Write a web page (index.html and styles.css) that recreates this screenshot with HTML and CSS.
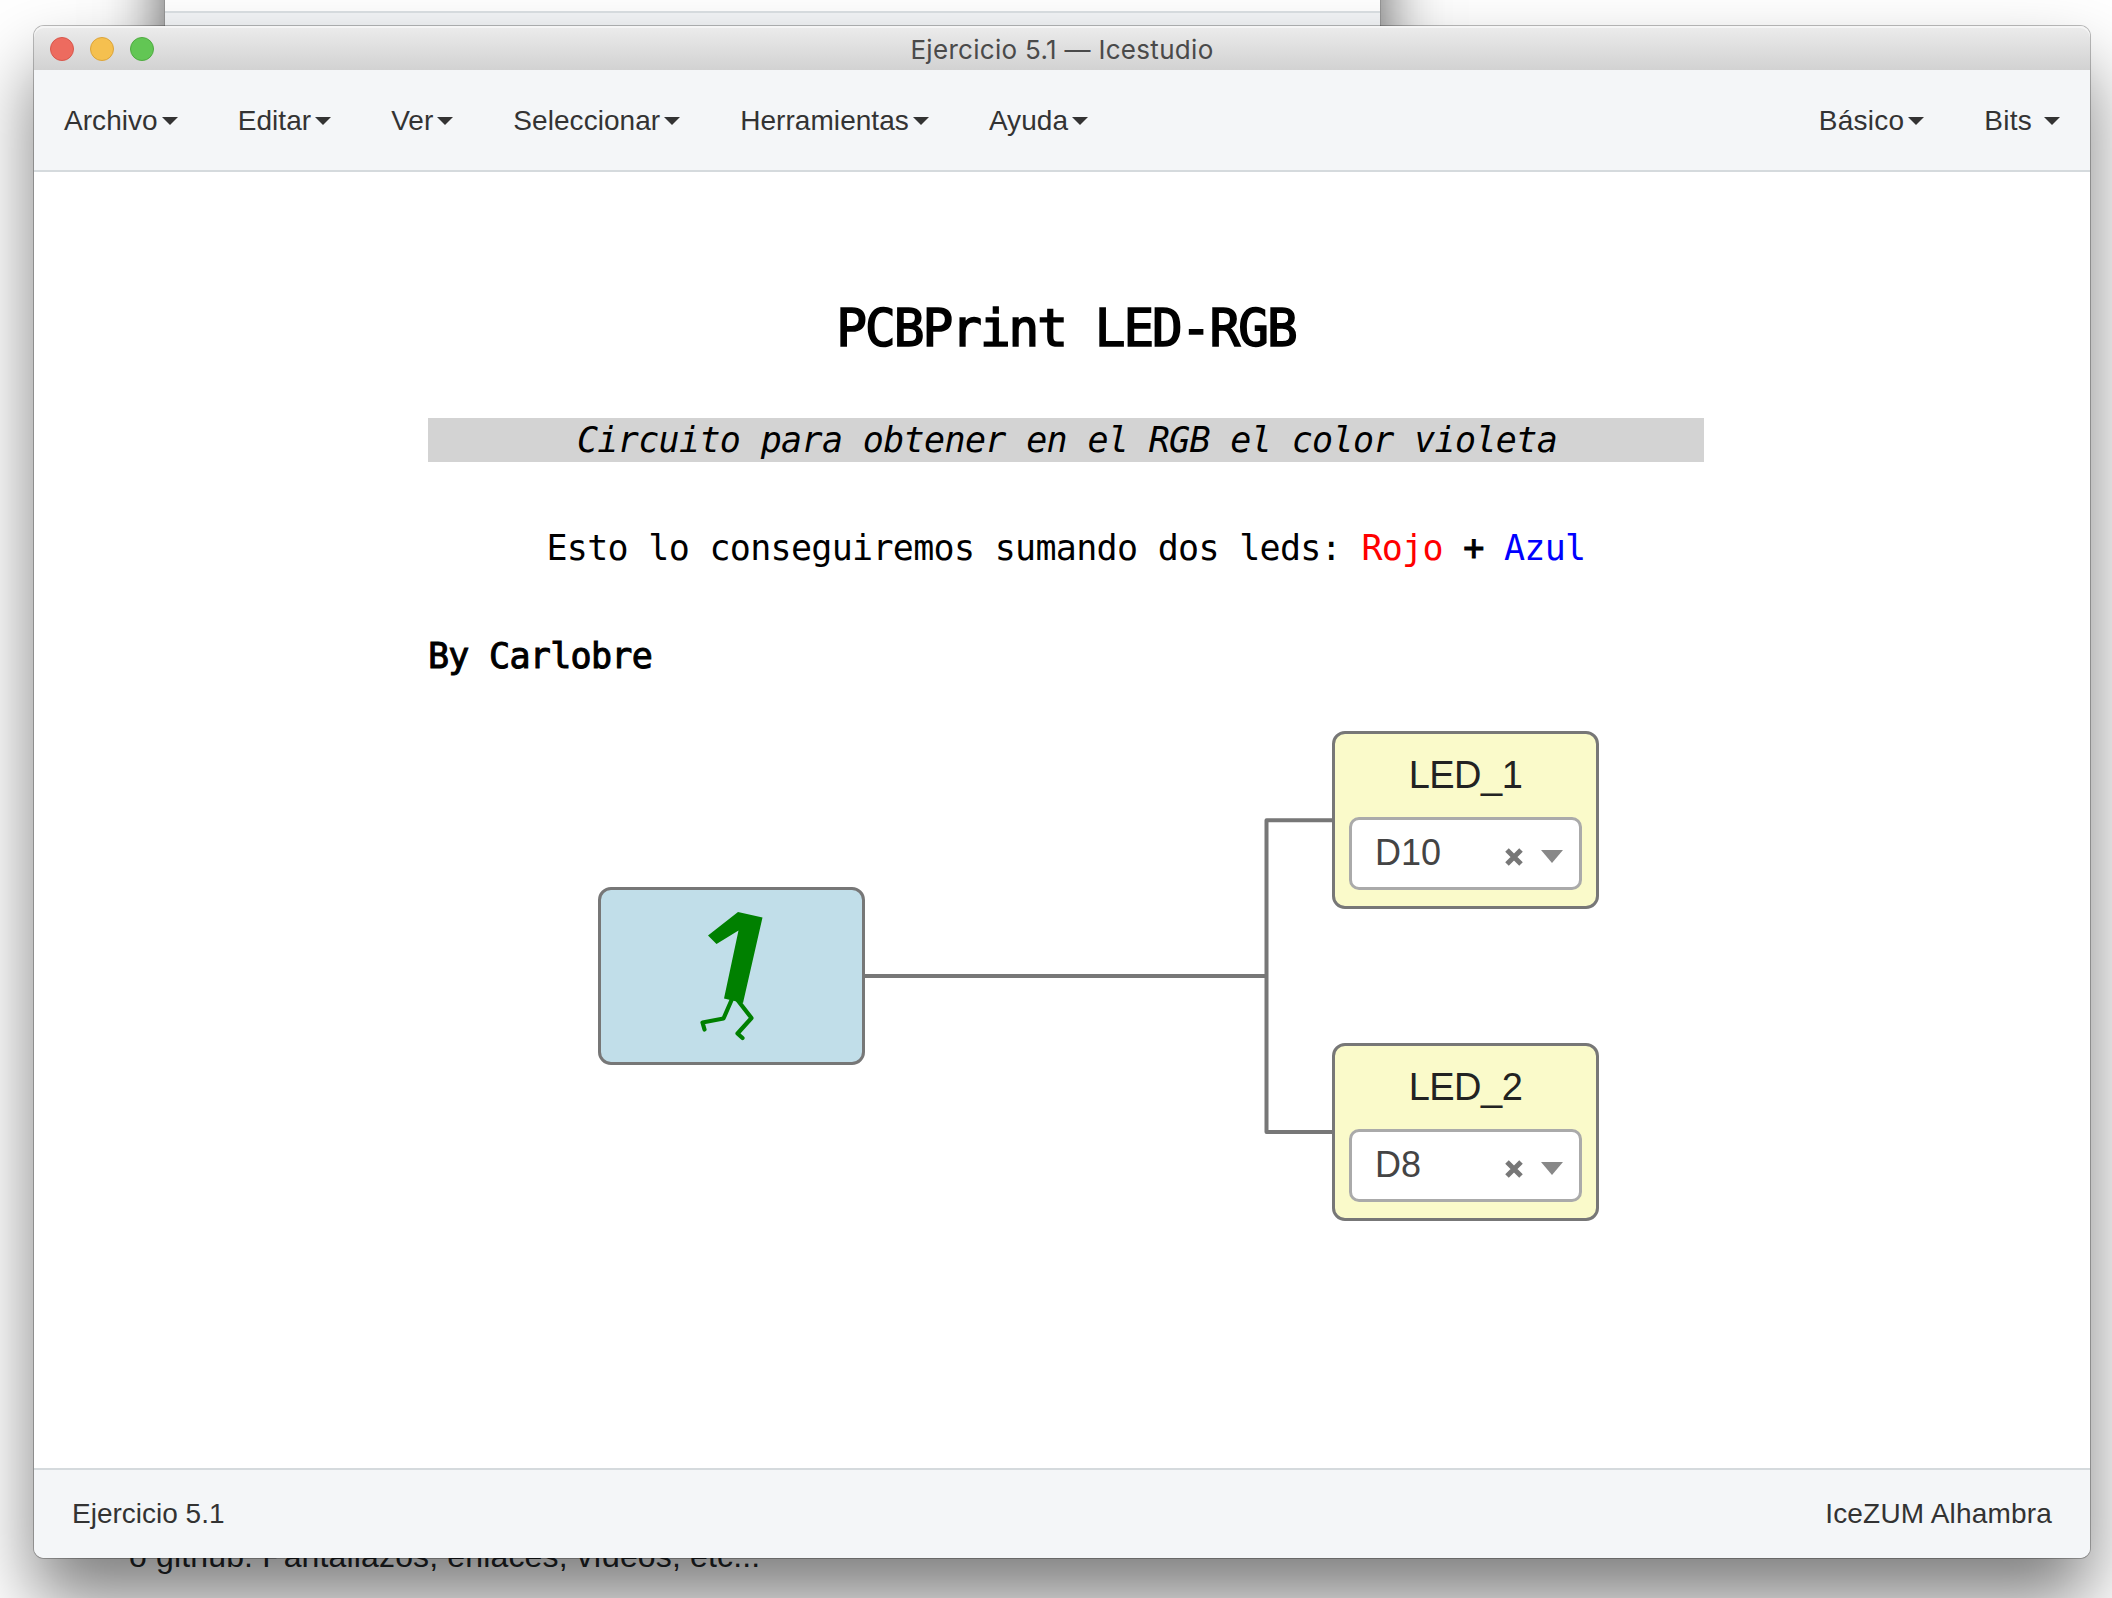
FILE: index.html
```html
<!DOCTYPE html>
<html lang="es">
<head>
<meta charset="utf-8">
<title>Ejercicio 5.1 — Icestudio</title>
<link rel="stylesheet" href="styles.css">
</head>
<body>
<div class="desktop">
  <div class="back-window"><div class="back-strip"></div></div>
  <p class="back-text">o github. Pantallazos, enlaces, vídeos, etc...</p>

  <div class="window">
    <header class="titlebar">
      <div class="lights"><i class="light close"></i><i class="light minimize"></i><i class="light expand"></i></div>
      <h1 class="window-title">Ejercicio 5.1 — Icestudio</h1>
    </header>

    <nav class="menubar">
      <ul class="menu">
        <li>Archivo<b class="caret"></b></li>
        <li>Editar<b class="caret"></b></li>
        <li>Ver<b class="caret"></b></li>
        <li>Seleccionar<b class="caret"></b></li>
        <li>Herramientas<b class="caret"></b></li>
        <li>Ayuda<b class="caret"></b></li>
      </ul>
      <ul class="menu right">
        <li>Básico<b class="caret"></b></li>
        <li>Bits&nbsp;<b class="caret"></b></li>
      </ul>
    </nav>

    <main class="canvas">
      <section class="note">
        <h2 class="note-title">PCBPrint LED-RGB</h2>
        <p class="note-highlight">Circuito para obtener en el RGB el color violeta</p>
        <p class="note-line">Esto lo conseguiremos sumando dos leds: <span class="red">Rojo</span> <strong>+</strong> <span class="blue">Azul</span></p>
        <p class="note-author">By Carlobre</p>
      </section>

      <svg class="wires" width="2056" height="1296" viewBox="0 0 2056 1296">
        <path d="M831 804H1232.5M1299 648.2H1232.5V960H1299"/>
      </svg>

      <div class="block constant">
        <svg width="261" height="172" viewBox="0 0 261 172">
          <path class="digit" d="M137 22 161.500 27.500 142 113 123 108.500 137.500 40.500 115.500 54 107 45.500Z"/>
          <path class="legs" d="M131 109 122.500 128.500 101.500 132.500 103.500 139.500M136.500 110 150.500 128 136.500 143.500 141.500 148"/>
        </svg>
      </div>

      <div class="block output first">
        <div class="label">LED_1</div>
        <div class="select"><span class="value">D10</span>
          <svg class="clear" width="18" height="18" viewBox="0 0 18 18"><path d="M2 2 16 16M16 2 2 16"/></svg>
          <b class="arrow"></b></div>
      </div>
      <div class="block output second">
        <div class="label">LED_2</div>
        <div class="select"><span class="value">D8</span>
          <svg class="clear" width="18" height="18" viewBox="0 0 18 18"><path d="M2 2 16 16M16 2 2 16"/></svg>
          <b class="arrow"></b></div>
      </div>
    </main>

    <footer class="statusbar"><span>Ejercicio 5.1</span><span class="board">IceZUM Alhambra</span></footer>
  </div>
</div>
</body>
</html>
```
FILE: styles.css
```css
* { box-sizing: border-box; }
body, h1, h2, p, ul { margin: 0; padding: 0; }
body {
  background: #fff;
  color: #333;
  font-family: "Liberation Sans", Arial, sans-serif;
  font-size: 28px;
}
.desktop { position: relative; width: 2112px; height: 1598px; overflow: hidden; }

/* Windows behind the active one */
.back-window {
  position: absolute; left: 165px; top: -700px; width: 1215px; height: 850px;
  background: #fff;
  box-shadow: 0 0 0 1px rgba(0,0,0,.12), 0 -40px 60px rgba(0,0,0,.68);
}
.back-strip { margin-top: 711px; height: 139px; border-top: 2px solid #dce1e4; background: #f4f6f8; }
.back-text {
  position: absolute; left: 129px; top: 1538px;
  font-size: 32px; line-height: 37px; letter-spacing: .15px; color: #222528; white-space: nowrap;
}

.window {
  position: absolute; left: 34px; top: 26px; width: 2056px; height: 1532px;
  display: flex; flex-direction: column;
  border-radius: 10px;
  background: #fff;
  box-shadow: 0 0 0 1px rgba(0,0,0,.26), 0 42px 72px rgba(0,0,0,.51);
}
.titlebar {
  display: grid; grid-template-columns: 1fr auto 1fr; align-items: center;
  height: 44px; padding: 0 16px;
  border-radius: 10px 10px 0 0;
  background: linear-gradient(#ececec, #d2d2d2);
  box-shadow: inset 0 2px 0 #f5f5f5;
}
.lights { display: flex; gap: 16px; }
.light { width: 24px; height: 24px; border-radius: 50%; border: 1px solid; }
.close { background: #ed6b5f; border-color: #d8574c; }
.minimize { background: #f5c04f; border-color: #dca43a; }
.expand { background: #62c654; border-color: #4fab41; }
.window-title {
  padding-top: 2px;
  font: 400 26px/44px Inter, sans-serif; letter-spacing: .3px; color: #4a4a4a;
}

.menubar {
  display: flex; justify-content: space-between;
  height: 102px; padding: 0 30px;
  background: #f4f6f8; border-bottom: 2px solid #d5dadd;
}
.menu { display: flex; gap: 60px; list-style: none; line-height: 101px; }
.menu li { display: flex; align-items: center; letter-spacing: .05px; }
.menu.right li { letter-spacing: .25px; }
.caret { margin: 2px 0 0 4px; border: 8px solid transparent; border-top-color: #333; border-bottom: 0; }

.canvas { position: relative; flex: 1; background: #fff; }
.note {
  position: absolute; left: 394px; top: 125px; width: 1276px;
  font: 35px/44px "DejaVu Sans Mono", monospace; letter-spacing: -.7px; color: #000;
  text-align: center;
}
.note p { margin-bottom: 64px; }
.note-title { margin-bottom: 57px; font-size: 51px; line-height: 64px; font-weight: 400; letter-spacing: -2px; -webkit-text-stroke: 1.6px #000; }
.note-highlight { background: #d3d3d3; font-style: italic; letter-spacing: -.65px; padding-left: 2px; }
.note-author { text-align: left; -webkit-text-stroke: 1px #000; }
.note strong { font-weight: 400; -webkit-text-stroke: 1px #000; }
.red { color: #f00; }
.blue { color: #00f; }

.wires { position: absolute; left: 0; top: 0; }
.wires path { fill: none; stroke: #777; stroke-width: 4; stroke-linejoin: round; }

.block { position: absolute; width: 267px; height: 178px; border: 3px solid #777; border-radius: 13px; }
.constant { left: 564px; top: 715px; background: #c1dee9; }
.constant svg { display: block; }
.digit { fill: #008000; }
.legs { fill: none; stroke: #008000; stroke-width: 4.2; stroke-linecap: round; stroke-linejoin: round; }
.output { left: 1298px; padding: 0 14px; background: #fafaca; }
.first { top: 559px; }
.second { top: 871px; }
.label { height: 83px; line-height: 83px; text-align: center; font-size: 38px; letter-spacing: -.5px; color: #222; }
.select {
  display: flex; align-items: center;
  height: 73px; padding: 0 16px 0 23px;
  border: 3px solid #aaa; border-radius: 10px; background: #fff;
}
.value { flex: 1; font-size: 36px; line-height: 65px; margin-bottom: 2px; color: #444; }
.clear { margin: 7px 18px 0 0; }
.clear path { stroke: #777; stroke-width: 5; }
.arrow { margin-top: 6px; border: 11px solid transparent; border-top: 13px solid #888; border-bottom: 0; }

.statusbar {
  display: flex; justify-content: space-between;
  height: 90px; padding: 0 38px; line-height: 87px;
  background: #f4f6f8; border-top: 2px solid #d5dadd; border-radius: 0 0 10px 10px;
}
.board { letter-spacing: .18px; }
```
